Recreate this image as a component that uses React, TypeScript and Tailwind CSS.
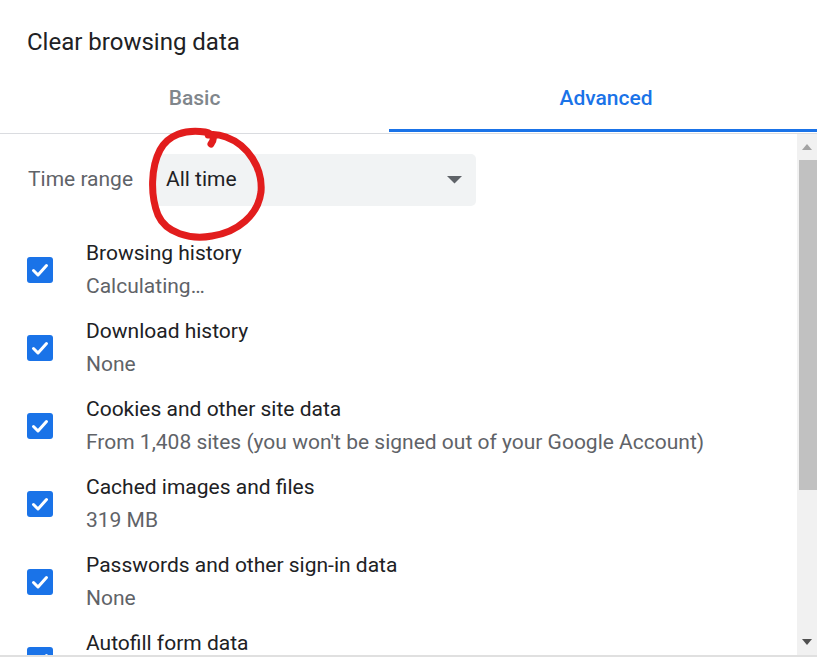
import React from "react";

const items = [
  { title: "Browsing history", sub: "Calculating…" },
  { title: "Download history", sub: "None" },
  { title: "Cookies and other site data", sub: "From 1,408 sites (you won't be signed out of your Google Account)" },
  { title: "Cached images and files", sub: "319 MB" },
  { title: "Passwords and other sign-in data", sub: "None" },
  { title: "Autofill form data", sub: "None" },
];

function Checkbox() {
  return (
    <div className="w-[26px] h-[26px] rounded-[3px] bg-[#1a73e8] flex items-center justify-center shrink-0">
      <svg width="26" height="26" viewBox="0 0 26 26">
        <path d="M6.5 13.5 L11 18 L19.5 8.5" fill="none" stroke="white" strokeWidth="3" strokeLinecap="round" strokeLinejoin="round" />
      </svg>
    </div>
  );
}

export default function App() {
  return (
    <div className="relative w-[817px] h-[657px] overflow-hidden bg-white font-['Roboto',sans-serif] flex flex-col">
      <div className="h-[66px] pt-[27px] pl-[27px] text-[24px] leading-[30px] text-[#202124] shrink-0">
        Clear browsing data
      </div>
      <div className="h-[66px] flex shrink-0">
        <div className="w-[389px] flex items-center justify-center pt-[3px] border-b-[3px] border-transparent text-[21px] font-medium text-[#80868b]">
          Basic
        </div>
        <div className="flex-1 flex items-center justify-center pt-[3px] pl-[6px] border-b-[3px] border-[#1a73e8] text-[21px] font-medium text-[#1a73e8]">
          Advanced
        </div>
      </div>
      <div className="h-px shrink-0" />
      <div className="h-px bg-[#dadce0] shrink-0" />
      <div className="flex h-[521px] shrink-0">
        <div className="flex-1 overflow-hidden pt-[20px]">
          <div className="flex items-center h-[52px]">
            <div className="w-[152px] pl-[28px] text-[21px] text-[#5f6368]">Time range</div>
            <div className="w-[324px] h-[52px] bg-[#f1f3f4] rounded-[5px] flex items-center justify-between pl-[14px] pr-[14px]">
              <span className="text-[21px] text-[#202124]">All time</span>
              <svg width="15" height="8" viewBox="0 0 15 8">
                <path d="M0 0 L15 0 L7.5 7.5 Z" fill="#5f6368" />
              </svg>
            </div>
          </div>
          <div className="h-[25px]" />
          {items.map((it) => (
            <div key={it.title} className="flex items-center h-[78px]">
              <div className="w-[86px] pl-[27px] shrink-0">
                <Checkbox />
              </div>
              <div className="flex flex-col text-[21px] leading-[33px] whitespace-nowrap">
                <span className="text-[#202124]">{it.title}</span>
                <span className="text-[#5f6368]">{it.sub}</span>
              </div>
            </div>
          ))}
        </div>
        <div className="w-[20px] bg-[#f1f1f1] flex flex-col shrink-0">
          <div className="h-[26px] flex items-center justify-center">
            <svg width="10" height="6" viewBox="0 0 10 6">
              <path d="M5 0 L10 6 L0 6 Z" fill="#a3a3a3" />
            </svg>
          </div>
          <div className="h-[330px] ml-[2px] bg-[#c1c1c1]" />
          <div className="flex-1" />
          <div className="h-[26px] flex items-center justify-center">
            <svg width="10" height="6" viewBox="0 0 10 6">
              <path d="M0 0 L10 0 L5 6 Z" fill="#505050" />
            </svg>
          </div>
        </div>
      </div>
      <div className="h-[2px] bg-[#e0e0e0] shrink-0" />
      <svg className="absolute inset-0 pointer-events-none" width="817" height="657" viewBox="0 0 817 657">
        <path
          d="M211 144 C215 139 214 134 205 132 C185 129 168 135 160 150 C151 167 150 195 158 215 C166 233 190 240 212 236 C238 232 258 215 261 192 C263 168 248 145 226 137 C218 134 212 134 208 135"
          fill="none"
          stroke="#e21d1d"
          strokeWidth="7"
          strokeLinecap="round"
          strokeLinejoin="round"
        />
      </svg>
    </div>
  );
}
